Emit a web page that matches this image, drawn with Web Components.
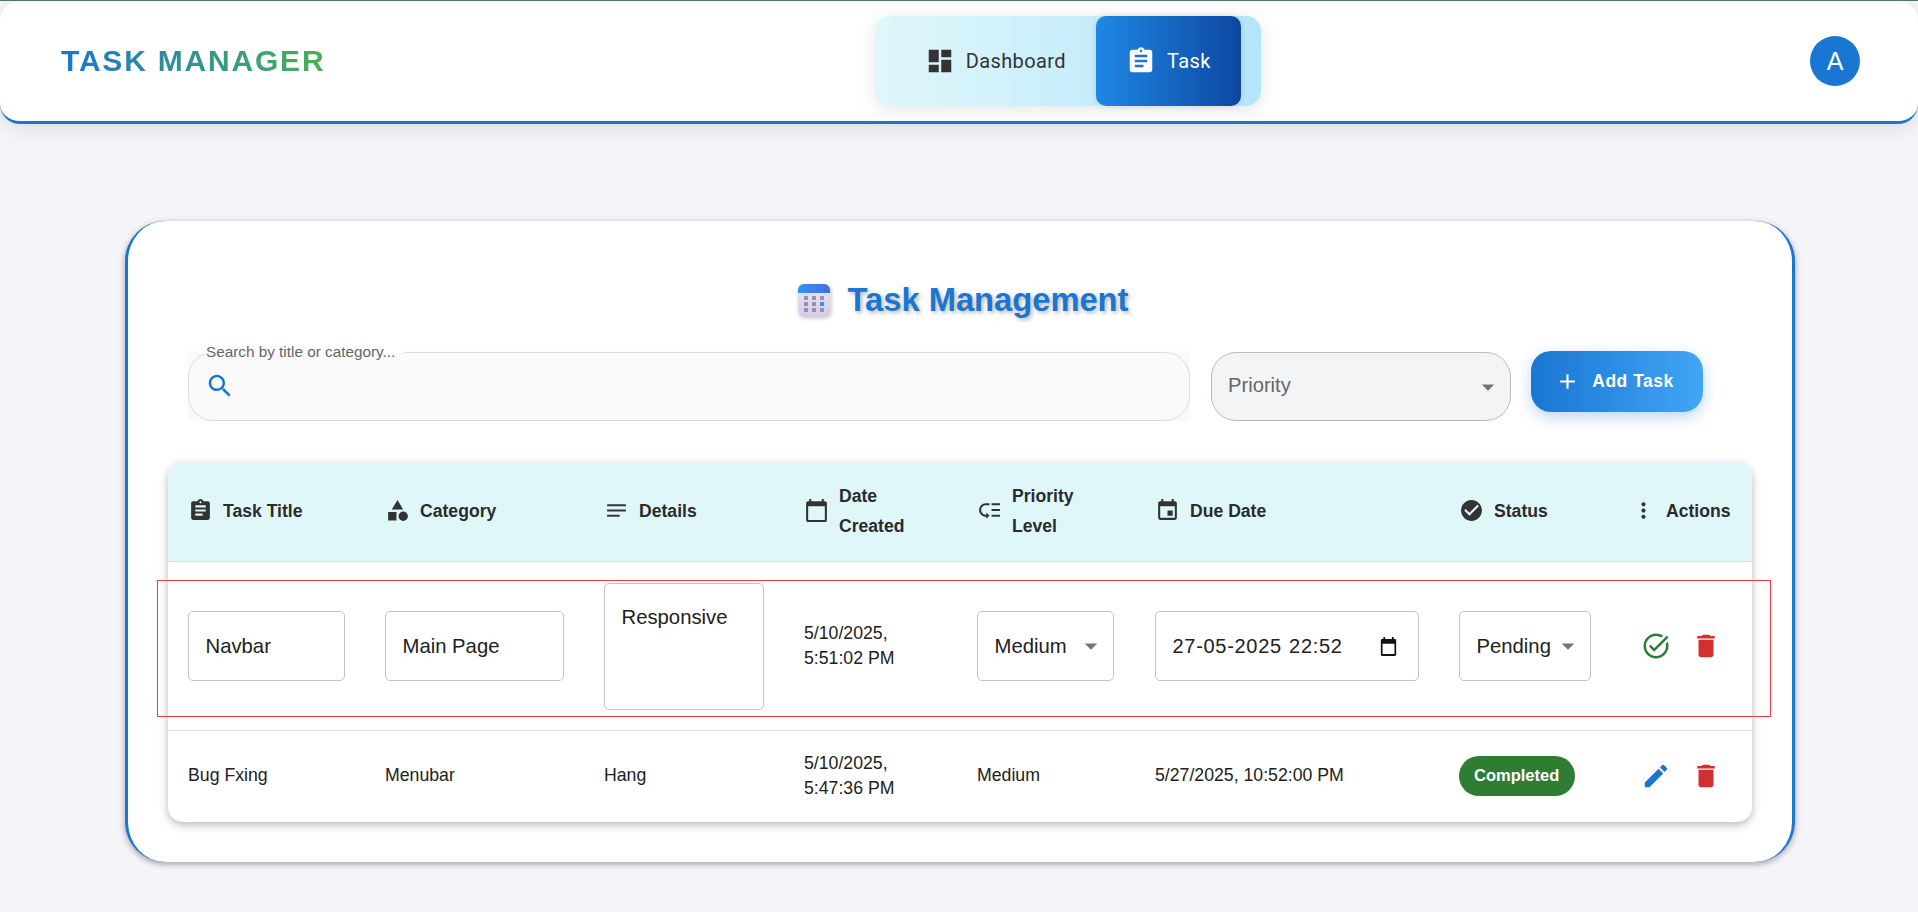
<!DOCTYPE html>
<html lang="en">
<head>
<meta charset="utf-8">
<title>Task Manager</title>
<style>
  html, body { margin: 0; height: 100%; }
  body {
    background: #f4f4f9;
    border-top: 1px solid #4a766c;
    box-sizing: border-box;
    overflow: hidden;
    font-family: "Liberation Sans", Arial, sans-serif;
    color: #212121;
  }
</style>
</head>
<body>
<task-page>
  <app-navbar>
    <nav-tab icon="dashboard">Dashboard</nav-tab>
    <nav-tab icon="assignment" active>Task</nav-tab>
  </app-navbar>

  <task-card>
    <task-toolbar></task-toolbar>
    <task-table>
      <task-row head>
        <head-cell icon="assignment">Task Title</head-cell>
        <head-cell icon="category">Category</head-cell>
        <head-cell icon="notes">Details</head-cell>
        <head-cell icon="calendar">Date<br>Created</head-cell>
        <head-cell icon="lowpriority">Priority<br>Level</head-cell>
        <head-cell icon="event">Due Date</head-cell>
        <head-cell icon="checkcircle">Status</head-cell>
        <head-cell icon="morevert" tight>Actions</head-cell>
      </task-row>
      <task-row>
        <task-cell><edit-field>Navbar</edit-field></task-cell>
        <task-cell><edit-field>Main Page</edit-field></task-cell>
        <task-cell><edit-field multiline>Responsive</edit-field></task-cell>
        <task-cell>5/10/2025,<br>5:51:02 PM</task-cell>
        <task-cell><edit-field kind="select" style="width:137px">Medium</edit-field></task-cell>
        <task-cell><edit-field kind="date">27-05-2025 22:52</edit-field></task-cell>
        <task-cell><edit-field kind="select" style="width:132px">Pending</edit-field></task-cell>
        <task-cell tight>
          <icon-btn icon="taskalt" color="#2e7d32"></icon-btn><icon-btn icon="delete" color="#d32f2f"></icon-btn>
        </task-cell>
      </task-row>
      <task-row last>
        <task-cell>Bug Fxing</task-cell>
        <task-cell>Menubar</task-cell>
        <task-cell>Hang</task-cell>
        <task-cell>5/10/2025,<br>5:47:36 PM</task-cell>
        <task-cell>Medium</task-cell>
        <task-cell>5/27/2025, 10:52:00 PM</task-cell>
        <task-cell><status-chip>Completed</status-chip></task-cell>
        <task-cell tight>
          <icon-btn icon="edit" color="#1976d2"></icon-btn><icon-btn icon="delete" color="#d32f2f"></icon-btn>
        </task-cell>
      </task-row>
    </task-table>
  </task-card>

  <mark-box></mark-box>
</task-page>

<script>
const ICONS = {
  dashboard: 'M3 13h8V3H3v10zm0 8h8v-6H3v6zm10 0h8V11h-8v10zm0-18v6h8V3h-8z',
  assignment: 'M19 3h-4.18C14.4 1.84 13.3 1 12 1c-1.3 0-2.4.84-2.82 2H5c-1.1 0-2 .9-2 2v14c0 1.1.9 2 2 2h14c1.1 0 2-.9 2-2V5c0-1.1-.9-2-2-2zm-7 0c.55 0 1 .45 1 1s-.45 1-1 1-1-.45-1-1 .45-1 1-1zm2 14H7v-2h7v2zm3-4H7v-2h10v2zm0-4H7V7h10v2z',
  search: 'M15.5 14h-.79l-.28-.27C15.41 12.59 16 11.11 16 9.5 16 5.91 13.09 3 9.5 3S3 5.91 3 9.5 5.91 16 9.5 16c1.61 0 3.09-.59 4.23-1.57l.27.28v.79l5 4.99L20.49 19l-4.99-5zm-6 0C7.01 14 5 11.99 5 9.5S7.01 5 9.5 5 14 7.01 14 9.5 11.99 14 9.5 14z',
  add: 'M19 13h-6v6h-2v-6H5v-2h6V5h2v6h6v2z',
  category: 'M12 2l-5.5 9h11zM17.5 13a4.5 4.5 0 1 0 0 9 4.5 4.5 0 0 0 0-9zM3 13.5h8v8H3z',
  notes: 'M3 18h12v-2H3v2zM3 6v2h18V6H3zm0 7h18v-2H3v2z',
  calendar: 'M20 3h-1V1h-2v2H7V1H5v2H4c-1.1 0-2 .9-2 2v16c0 1.1.9 2 2 2h16c1.1 0 2-.9 2-2V5c0-1.1-.9-2-2-2zm0 18H4V8h16v13z',
  lowpriority: 'M14 5h8v2h-8zm0 5.5h8v2h-8zm0 5.5h8v2h-8zM2 11.5C2 15.08 4.92 18 8.5 18H9v2l3-3-3-3v2h-.5C6.02 16 4 13.98 4 11.5S6.02 7 8.5 7H12V5H8.5C4.92 5 2 7.92 2 11.5z',
  event: 'M17 12h-5v5h5v-5zM16 1v2H8V1H6v2H5c-1.11 0-1.99.9-1.99 2L3 19c0 1.1.89 2 2 2h14c1.1 0 2-.9 2-2V5c0-1.1-.9-2-2-2h-1V1h-2zm3 18H5V8h14v11z',
  checkcircle: 'M12 2C6.48 2 2 6.48 2 12s4.48 10 10 10 10-4.48 10-10S17.52 2 12 2zm-2 15l-5-5 1.41-1.41L10 14.17l7.59-7.59L19 8l-9 9z',
  morevert: 'M12 8c1.1 0 2-.9 2-2s-.9-2-2-2-2 .9-2 2 .9 2 2 2zm0 2c-1.1 0-2 .9-2 2s.9 2 2 2 2-.9 2-2-.9-2-2-2zm0 6c-1.1 0-2 .9-2 2s.9 2 2 2 2-.9 2-2-.9-2-2-2z',
  delete: 'M6 19c0 1.1.9 2 2 2h8c1.1 0 2-.9 2-2V7H6v12zM19 4h-3.5l-1-1h-5l-1 1H5v2h14V4z',
  edit: 'M3 17.25V21h3.75L17.81 9.94l-3.75-3.75L3 17.25zM20.71 7.04c.39-.39.39-1.02 0-1.41l-2.34-2.34a.9959.9959 0 0 0-1.41 0l-1.83 1.83 3.75 3.75 1.83-1.83z',
  taskalt: 'M22 5.18 10.59 16.6l-4.24-4.24 1.41-1.41 2.83 2.83 10-10L22 5.18zm-2.21 5.04c.13.57.21 1.17.21 1.78 0 4.42-3.58 8-8 8s-8-3.58-8-8 3.58-8 8-8c1.58 0 3.04.46 4.28 1.25l1.44-1.44C16.1 2.67 14.13 2 12 2 6.48 2 2 6.48 2 12s4.48 10 10 10 10-4.48 10-10c0-1.19-.22-2.33-.6-3.39l-1.61 1.61z',
  caret: 'M7 10l5 5 5-5z'
}

// small helper, every element below is the same three lines otherwise
function shadow(el, html) {
  el.attachShadow({ mode: 'open' }).innerHTML = html
}

function iconSvg(name, size) {
  return `<svg width="${size}" height="${size}" viewBox="0 0 24 24" fill="currentColor" style="display:block;flex:none"><path d="${ICONS[name]}"/></svg>`
}

customElements.define('task-page', class extends HTMLElement {
  connectedCallback() {
    shadow(this, `<style>
      :host { display: block; position: relative; }
    </style><slot></slot>`)
  }
})

customElements.define('app-navbar', class extends HTMLElement {
  connectedCallback() {
    shadow(this, `<style>
      :host {
        display: flex;
        align-items: center;
        justify-content: space-between;
        box-sizing: border-box;
        height: 123px;
        padding: 0 58px 0 61px;
        background: #fff;
        border-bottom: 3px solid #1976d2;
        border-radius: 20px;
        box-shadow: 0 4px 20px rgba(0, 0, 0, 0.1);
      }
      .brand {
        font: bold 30px "Liberation Sans", Arial, sans-serif;
        letter-spacing: 1.8px;
        background: linear-gradient(90deg, #1976d2, #4caf50);
        -webkit-background-clip: text;
        background-clip: text;
        color: transparent;
      }
      .tabs {
        display: flex;
        height: 90px;
        padding: 0 20px;
        background: linear-gradient(90deg, #e0f7fa, #b3e5fc);
        border-radius: 15px;
        box-shadow: 0 4px 20px rgba(0, 0, 0, 0.1);
      }
      .avatar {
        width: 50px;
        height: 50px;
        border-radius: 50%;
        background: #1976d2;
        color: #fff;
        font: 25px "Liberation Sans", Arial, sans-serif;
        display: flex;
        align-items: center;
        justify-content: center;
      }
    </style>
    <div class="brand">TASK MANAGER</div>
    <div class="tabs"><slot></slot></div>
    <div class="avatar">A</div>`)
  }
})

customElements.define('nav-tab', class extends HTMLElement {
  connectedCallback() {
    shadow(this, `<style>
      :host {
        display: flex;
        align-items: center;
        gap: 11px;
        padding: 0 30px;
        font: 20px Roboto, sans-serif;
        letter-spacing: 0.4px;
        color: #333;
      }
      :host([active]) {
        color: #fff;
        border-radius: 10px;
        background: linear-gradient(90deg, #1e88e5, #0d47a1);
        box-shadow: 0 0 6px rgba(0, 0, 0, 0.12);
      }
    </style>${iconSvg(this.getAttribute('icon'), 30)}<slot></slot>`)
  }
})

customElements.define('task-card', class extends HTMLElement {
  connectedCallback() {
    shadow(this, `<style>
      :host {
        display: block;
        box-sizing: border-box;
        width: 1670px;
        margin: 97px 0 0 125px;
        padding: 59px 40px 40px;
        background: #fff;
        border-left: 3px solid #1976d2;
        border-right: 3px solid #1976d2;
        border-radius: 40px;
        box-shadow: 0 2px 6px rgba(0, 0, 0, 0.35);
      }
      h1 {
        display: flex;
        justify-content: center;
        align-items: center;
        gap: 16px;
        height: 40px;
        margin: 0 0 32px;
        padding-left: 4px;
        font: bold 32.7px/40px "Liberation Sans", Arial, sans-serif;
        color: #1976d2;
        text-shadow: 2px 2px 4px rgba(0, 0, 0, 0.3);
      }
      svg { display: block; flex: none; filter: drop-shadow(1px 2px 2px rgba(0,0,0,.25)); }
    </style>
    <h1>
      <svg width="36" height="36" viewBox="0 0 36 36">
        <defs>
          <linearGradient id="body" x1="0" y1="0" x2="0" y2="1"><stop offset="0" stop-color="#eae4f4"/><stop offset="1" stop-color="#d6cdea"/></linearGradient>
          <linearGradient id="top" x1="0" y1="0" x2="1" y2="0"><stop offset="0" stop-color="#2f96f4"/><stop offset="1" stop-color="#4a6ae0"/></linearGradient>
        </defs>
        <rect x="2" y="2" width="32" height="32" rx="6" fill="url(#body)"/>
        <path d="M2 11V8a6 6 0 0 1 6-6h20a6 6 0 0 1 6 6v3z" fill="url(#top)"/>
        <g fill="#9a93ad">
          <rect x="8" y="14" width="4" height="4"/><rect x="16" y="14" width="4" height="4"/><rect x="24" y="14" width="4" height="4"/>
          <rect x="8" y="20" width="4" height="4"/><rect x="16" y="20" width="4" height="4"/>
          <rect x="8" y="26" width="4" height="4"/><rect x="16" y="26" width="4" height="4"/><rect x="24" y="26" width="4" height="4"/>
        </g>
        <rect x="24" y="20" width="4" height="4" fill="#2f96f4"/>
      </svg>
      <span>Task Management</span>
    </h1>
    <slot></slot>`)
  }
})

customElements.define('task-toolbar', class extends HTMLElement {
  connectedCallback() {
    shadow(this, `<style>
      :host {
        display: flex;
        align-items: flex-start;
        gap: 21px;
        margin: 0 49px 41px 20px;
      }
      .search {
        position: relative;
        flex: 1;
        height: 70px;
        margin-top: -1px;
        box-sizing: border-box;
        padding-left: 17px;
        display: flex;
        align-items: center;
        color: #1976d2;
        background: #fafafa;
      }
      /* the fill stays square, only the outline is rounded */
      .search::before {
        content: '';
        position: absolute;
        inset: 1px 0 0 0;
        border: 1px solid #ddd;
        border-radius: 25px;
      }
      .search label {
        position: absolute;
        top: -8px;
        left: 10px;
        padding: 0 9px 0 8px;
        background: linear-gradient(#fff 0 10px, transparent 10px);
        font-size: 15.3px;
        line-height: 17px;
        color: #666;
      }
      .priority {
        width: 300px;
        height: 69px;
        box-sizing: border-box;
        display: flex;
        align-items: center;
        justify-content: space-between;
        padding: 0 7px 0 16px;
        background: #f3f4f6;
        border: 1px solid #bbb;
        border-radius: 25px;
        font-size: 20.2px;
        color: #666;
      }
      .priority span { margin-top: -2px; }
      .priority svg { color: #757575; }
      button {
        margin: -1px 0 0 -1px;
        width: 172px;
        height: 61px;
        padding: 0 5px 0 0;
        display: flex;
        align-items: center;
        justify-content: center;
        gap: 12px;
        border: 0;
        border-radius: 20px;
        background: linear-gradient(90deg, #1976d2, #42a5f5);
        box-shadow: 0 5px 15px rgba(25, 118, 210, 0.3);
        color: #fff;
        font: bold 17.5px "Liberation Sans", Arial, sans-serif;
        letter-spacing: 0.5px;
      }
    </style>
    <div class="search"><label>Search by title or category...</label>${iconSvg('search', 30)}</div>
    <div class="priority"><span>Priority</span>${iconSvg('caret', 30)}</div>
    <button>${iconSvg('add', 25)}<span>Add Task</span></button>`)
  }
})

customElements.define('task-table', class extends HTMLElement {
  connectedCallback() {
    shadow(this, `<style>
      :host {
        display: block;
        --cols: 197px 219px 200px 173px 178px 304px 182px 131px;
        border-radius: 15px;
        background: #fff;
        overflow: hidden;
        box-shadow: 0 3px 8px rgba(0, 0, 0, 0.28);
      }
    </style><slot></slot>`)
  }
})

customElements.define('task-row', class extends HTMLElement {
  connectedCallback() {
    shadow(this, `<style>
      :host {
        display: grid;
        grid-template-columns: var(--cols);
        align-items: center;
        height: 169px;
        box-sizing: border-box;
        border-bottom: 1px solid #e0e0e0;
      }
      :host([head]) {
        height: 100px;
        padding-bottom: 2px;
        background: #e0f7fa;
      }
      :host([last]) {
        height: 91px;
        padding-bottom: 2px;
        border-bottom: 0;
      }
    </style><slot></slot>`)
  }
})

customElements.define('head-cell', class extends HTMLElement {
  connectedCallback() {
    shadow(this, `<style>
      :host {
        display: flex;
        align-items: center;
        gap: 10px;
        padding-left: 20px;
        font-weight: bold;
        font-size: 17.6px;
        line-height: 30px;
        color: #2b2b2b;
      }
      :host([tight]) { padding-left: 10px; }
      svg { color: #333; }
    </style>${iconSvg(this.getAttribute('icon'), 25)}<div><slot></slot></div>`)
  }
})

customElements.define('task-cell', class extends HTMLElement {
  connectedCallback() {
    shadow(this, `<style>
      :host {
        display: block;
        padding: 0 20px;
        font-size: 17.7px;
        line-height: 25px;
        color: #212121;
      }
      :host([tight]) {
        display: flex;
        padding: 0 0 0 10px;
      }
    </style><slot></slot>`)
  }
})

customElements.define('edit-field', class extends HTMLElement {
  connectedCallback() {
    var kind = this.getAttribute('kind')
    var tail = ''
    if (kind == 'select') tail = iconSvg('caret', 30)
    if (kind == 'date') {
      tail = `<svg width="17" height="19" viewBox="0 0 20 20" preserveAspectRatio="none" style="display:block;flex:none"><path fill="#111" d="M4 0h2v2h8V0h2v2h1.5c.8 0 1.5.7 1.5 1.5v15c0 .8-.7 1.5-1.5 1.500h-15C1.700 20 1 19.300 1 18.500v-15C1 2.700 1.700 2 2.500 2H4zM3 7v11h14V7z"/></svg>`
    }
    shadow(this, `<style>
      :host {
        display: flex;
        align-items: center;
        justify-content: space-between;
        box-sizing: border-box;
        height: 70px;
        padding: 0 17px 0 16.5px;
        background: #fff;
        border: 1px solid #c4c4c4;
        border-radius: 5px;
        font-size: 20.3px;
        line-height: 23px;
        color: #212121;
        white-space: nowrap;
      }
      :host([multiline]) {
        height: 127px;
        align-items: flex-start;
        padding-top: 22px;
      }
      :host([kind='select']) { padding-right: 7px; }
      :host([kind='date']) {
        padding-right: 21px;
        font-size: 20px;
        letter-spacing: 0.7px;
        word-spacing: 1px;
      }
      svg { color: #757575; }
    </style><span><slot></slot></span>${tail}`)
  }
})

customElements.define('icon-btn', class extends HTMLElement {
  connectedCallback() {
    shadow(this, `<style>
      :host {
        display: flex;
        align-items: center;
        justify-content: center;
        width: 50px;
        height: 50px;
        color: ${this.getAttribute('color')};
      }
    </style>${iconSvg(this.getAttribute('icon'), 30)}`)
  }
})

customElements.define('status-chip', class extends HTMLElement {
  connectedCallback() {
    shadow(this, `<style>
      :host {
        display: inline-flex;
        align-items: center;
        height: 40px;
        padding: 0 16px 0 15px;
        vertical-align: middle;
        border-radius: 20px;
        background: #2e7d32;
        color: #fff;
        font-weight: bold;
        font-size: 16.5px;
      }
    </style><slot></slot>`)
  }
})

// red frame somebody drew over the screenshot, sits on top of the first row
customElements.define('mark-box', class extends HTMLElement {
  connectedCallback() {
    shadow(this, `<style>
      :host {
        position: absolute;
        left: 157px;
        top: 579px;
        width: 1614px;
        height: 137px;
        box-sizing: border-box;
        border: 1px solid #ee3b3b;
        pointer-events: none;
      }
    </style>`)
  }
})
</script>
</body>
</html>
